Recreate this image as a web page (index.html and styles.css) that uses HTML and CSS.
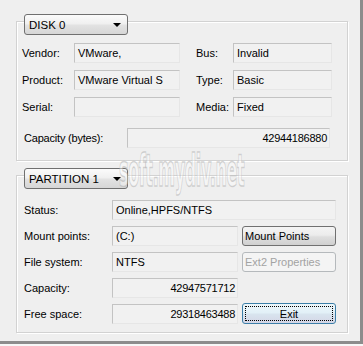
FILE: index.html
```html
<!DOCTYPE html>
<html>
<head>
<meta charset="utf-8">
<link rel="stylesheet" href="styles.css">
</head>
<body>
<div class="window">
  <div class="group g1">
    <div class="combo"><span>DISK 0</span><i class="arrow"></i></div>
    <div class="grid1">
      <span class="lbl">Vendor:</span><div class="fld">VMware,</div><span class="lbl">Bus:</span><div class="fld">Invalid</div>
      <span class="lbl">Product:</span><div class="fld">VMware Virtual S</div><span class="lbl">Type:</span><div class="fld">Basic</div>
      <span class="lbl">Serial:</span><div class="fld"></div><span class="lbl">Media:</span><div class="fld">Fixed</div>
    </div>
    <div class="caprow"><span class="lbl caplbl">Capacity (bytes):</span><div class="fld num capfld">42944186880</div></div>
  </div>
  <div class="group g2">
    <div class="combo"><span>PARTITION 1</span><i class="arrow"></i></div>
    <div class="grid2">
      <span class="lbl">Status:</span><div class="fld wide">Online,HPFS/NTFS</div>
      <span class="lbl">Mount points:</span><div class="fld">(C:)</div><div class="btn">Mount Points</div>
      <span class="lbl">File system:</span><div class="fld">NTFS</div><div class="btn disabled">Ext2 Properties</div>
      <span class="lbl">Capacity:</span><div class="fld num">42947571712</div><div></div>
      <span class="lbl">Free space:</span><div class="fld num">29318463488</div><div class="btn exit"><span>Exit</span></div>
    </div>
  </div>
  <div class="watermark">soft.mydiv.net</div>
</div>
</body>
</html>
```
FILE: styles.css
```css
html, body {
  margin: 0;
  padding: 0;
  background: #f7f7f7;
}
body {
  font-family: "Liberation Sans", Arial, sans-serif;
  font-size: 11px;
  color: #000;
}
.window {
  position: relative;
  box-sizing: border-box;
  width: 363px;
  height: 344px;
  background: #efefef;
  border-right: 3px solid #8c8c8c;
  border-bottom: 3px solid #8c8c8c;
  padding: 21px 0 0 16px;
  display: flex;
  flex-direction: column;
  gap: 14px;
}
.group {
  box-sizing: border-box;
  width: 332px;
  border: 1px solid #d2d2d2;
  box-shadow: inset 1px 1px 0 #ffffff, 1px 1px 0 #ffffff;
  display: flex;
  flex-direction: column;
}
.g1 { height: 140px; }
.g2 { height: 158px; }
.combo {
  box-sizing: border-box;
  width: 104px;
  height: 21px;
  margin: -8px 0 0 7px;
  border: 1px solid #707070;
  border-radius: 3px;
  background: linear-gradient(#fbfbfb, #f0f0f0 45%, #e2e2e2 55%, #d6d6d6);
  display: flex;
  align-items: center;
  justify-content: space-between;
  padding: 0 4px 0 4px;
  font-size: 11.5px;
}
.arrow {
  width: 0;
  height: 0;
  border-left: 4px solid transparent;
  border-right: 4px solid transparent;
  border-top: 4px solid #000;
  margin-right: 2px;
}
.fld {
  box-sizing: border-box;
  height: 20px;
  border: 1px solid;
  border-color: #c3c3c3 #e6e6e6 #e6e6e6 #c3c3c3;
  background: #f1f1f1;
  padding: 0 3px;
  display: flex;
  align-items: center;
  white-space: nowrap;
  overflow: hidden;
  font-size: 11px;
}
.num { justify-content: flex-end; padding-right: 2px; letter-spacing: -0.25px; }
.lbl { display: flex; align-items: center; height: 20px; white-space: nowrap; font-size: 11px; }
.grid1 {
  margin: 8px 0 0 5px;
  display: grid;
  grid-template-columns: 52px 106px 16px 37px 99px;
  row-gap: 7px;
}
.grid1 .lbl:nth-child(4n+3) { grid-column: 4; }
.caprow {
  margin: 11px 0 0 7px;
  display: flex;
}
.caplbl { width: 103px; letter-spacing: -0.2px; }
.capfld { width: 203px; }
.grid2 {
  margin: 11px 0 0 7px;
  display: grid;
  grid-template-columns: 84px 126px 94px;
  column-gap: 4px;
  row-gap: 6px;
}
.wide { grid-column: 2 / 4; }
.btn {
  box-sizing: border-box;
  height: 20px;
  border: 1px solid #707070;
  border-radius: 3px;
  background: linear-gradient(#f4f4f4, #ececec 45%, #dedede 55%, #d0d0d0);
  display: flex;
  align-items: center;
  padding-left: 2px;
  font-size: 11px;
  white-space: nowrap;
}
.btn.disabled {
  border-color: #b5b9bc;
  background: #f4f4f4;
  color: #a3a3a3;
}
.btn.exit {
  height: 21px;
  margin-top: -1px;
  border-color: #3c7fa8;
  background: linear-gradient(#edf7fb, #e2f0f7 45%, #d8e4ee 55%, #d4d6e6);
  padding: 2px;
  justify-content: center;
}
.btn.exit span {
  flex: 1;
  align-self: stretch;
  border: 1px dotted #000;
  display: flex;
  align-items: center;
  justify-content: center;
}
.watermark {
  position: absolute;
  left: 119px;
  top: 145px;
  font-family: "DejaVu Sans", sans-serif;
  font-weight: bold;
  font-size: 45px;
  line-height: 52px;
  letter-spacing: -1px;
  transform: scaleX(0.355);
  transform-origin: left top;
  color: rgba(255, 255, 255, 0.4);
  -webkit-text-stroke: 1.5px rgba(175, 175, 175, 0.55);
  pointer-events: none;
}
```
